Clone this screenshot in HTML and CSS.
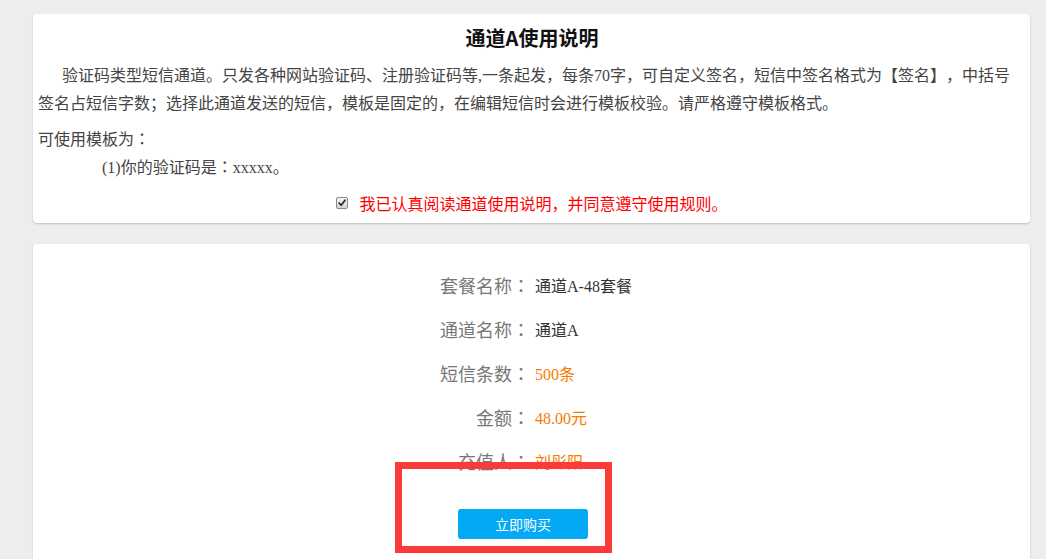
FILE: index.html
```html
<!DOCTYPE html>
<html lang="zh-CN">
<head>
<meta charset="utf-8">
<title>通道A使用说明</title>
<link rel="stylesheet" href="styles.css">
</head>
<body>
<div class="page">
  <section class="card intro">
    <h2 class="title">通道A使用说明</h2>
    <p class="desc">验证码类型短信通道。只发各种网站验证码、注册验证码等,一条起发，每条70字，可自定义签名，短信中签名格式为【签名】，中括号签名占短信字数；选择此通道发送的短信，模板是固定的，在编辑短信时会进行模板校验。请严格遵守模板格式。</p>
    <div class="tpl">
      <p class="tpl-head">可使用模板为<span class="colon" lang="zh-TW">：</span></p>
      <p class="tpl-item">(1)你的验证码是<span class="colon" lang="zh-TW">：</span>xxxxx。</p>
    </div>
    <label class="agree">
      <span class="check"><svg viewBox="0 0 12 12" width="12" height="12"><path d="M2.6 6.2 L5 8.7 L9.6 2.6" fill="none" stroke="#2b2b2b" stroke-width="2.1" stroke-linecap="round" stroke-linejoin="round"/></svg></span>
      <span class="agree-text">我已认真阅读通道使用说明，并同意遵守使用规则。</span>
    </label>
  </section>

  <section class="card order">
    <div class="row"><span class="lbl">套餐名称<span class="colon" lang="zh-TW">：</span></span><span class="val">通道A-48套餐</span></div>
    <div class="row"><span class="lbl">通道名称<span class="colon" lang="zh-TW">：</span></span><span class="val">通道A</span></div>
    <div class="row"><span class="lbl">短信条数<span class="colon" lang="zh-TW">：</span></span><span class="val orange">500条</span></div>
    <div class="row"><span class="lbl">金额<span class="colon" lang="zh-TW">：</span></span><span class="val orange">48.00元</span></div>
    <div class="row"><span class="lbl">充值人<span class="colon" lang="zh-TW">：</span></span><span class="val orange">刘彤阳</span></div>
    <div class="actions"><button class="buy" type="button">立即购买</button></div>
  </section>
</div>
<div class="highlight"></div>
</body>
</html>
```

FILE: styles.css
```css
html, body {
  margin: 0;
  padding: 0;
  background: #ededed;
  overflow: hidden;
}
body {
  width: 1046px;
  height: 559px;
  position: relative;
  font-family: "Liberation Serif", "Noto Sans CJK SC", serif;
  color: #333;
  text-spacing-trim: space-all;
}
.page {
  padding: 14px 0 0 33px;
  display: flex;
  flex-direction: column;
  gap: 21px;
}
.card {
  width: 997px;
  background: #fff;
  border-radius: 4px;
  box-shadow: 0 1px 2px rgba(0, 0, 0, 0.18);
  box-sizing: border-box;
}
.intro {
  padding: 10px 4px 6px 5px;
}
.title {
  margin: 0 0 10px;
  text-align: center;
  font-family: "Noto Sans CJK SC", "Liberation Sans", sans-serif;
  font-weight: bold;
  font-size: 20px;
  line-height: 28px;
  color: #111;
}
.desc {
  margin: 0;
  padding-right: 6px;
  font-size: 16px;
  line-height: 28px;
  text-indent: 24px;
  color: #444;
}
.tpl {
  margin-top: 8px;
}
.tpl p {
  margin: 0;
  font-size: 16px;
  line-height: 28px;
  height: 28px;
  color: #444;
}
.tpl-item {
  padding-left: 64px;
}
.colon {
  font-family: "Noto Sans CJK TC", "Noto Sans CJK SC", sans-serif;
  line-height: 0;
}
.agree {
  margin-top: 7px;
  display: flex;
  justify-content: center;
  align-items: center;
  height: 28px;
  gap: 11px;
}
.check {
  width: 12px;
  height: 12px;
  box-sizing: border-box;
  border: 1px solid #8a8a8a;
  border-radius: 2px;
  background: linear-gradient(#f4f4f4, #d6d6d6);
  display: flex;
  align-items: center;
  justify-content: center;
}
.check svg {
  display: block;
}
.agree-text {
  font-family: "Noto Sans CJK SC", "Liberation Sans", sans-serif;
  font-size: 16px;
  color: #ff0000;
  line-height: 28px;
}
.order {
  height: 316px;
  padding-top: 19px;
  border-radius: 4px 4px 0 0;
}
.row {
  display: flex;
  align-items: center;
  height: 44px;
}
.lbl {
  width: 200px;
  margin-left: 297px;
  text-align: right;
  font-family: "Noto Sans CJK SC", "Liberation Sans", sans-serif;
  font-size: 18px;
  color: #777;
}
.val {
  margin-left: 5px;
  font-size: 16px;
  color: #333;
}
.orange {
  color: #f57c00;
}
.actions {
  margin-top: 26px;
  padding-left: 425px;
}
.buy {
  width: 130px;
  height: 30px;
  border: 0;
  border-radius: 3px;
  background: #03a9f4;
  color: #fff;
  font-family: "Noto Sans CJK SC", "Liberation Sans", sans-serif;
  font-size: 14px;
  padding: 0;
  display: block;
}
.highlight {
  position: absolute;
  left: 395px;
  top: 462px;
  width: 217px;
  height: 91px;
  box-sizing: border-box;
  border: 7px solid #fc3a3a;
}
```
